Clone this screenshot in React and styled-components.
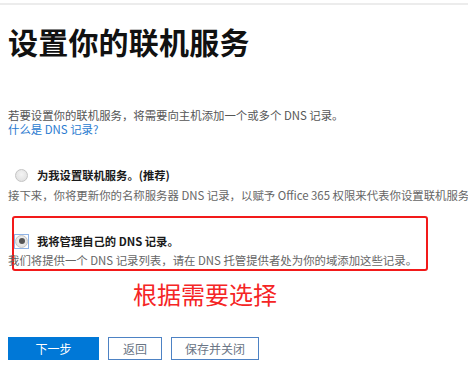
import React, { useState } from "react";
import styled, { createGlobalStyle } from "styled-components";

const GlobalStyle = createGlobalStyle`
  html, body {
    margin: 0;
    padding: 0;
    background: #fff;
    overflow: hidden;
  }
  body {
    font-family: "Noto Sans CJK SC", "Noto Sans", sans-serif;
  }
`;

export default function App() {
  const [choice, setChoice] = useState("self");

  return (
    <Page>
      <GlobalStyle />
      <TopRule />
      <Title>设置你的联机服务</Title>
      <Intro>
        <IntroLine>若要设置你的联机服务，将需要向主机添加一个或多个 DNS 记录。</IntroLine>
        <Link href="#">什么是 DNS 记录?</Link>
      </Intro>

      <Option>
        <OptionRow onClick={() => setChoice("auto")}>
          <Radio checked={choice === "auto"} />
          <Label>为我设置联机服务。(推荐)</Label>
        </OptionRow>
        <Desc>
          接下来，你将更新你的名称服务器 DNS 记录，以赋予 Office 365 权限来代表你设置联机服务
        </Desc>
      </Option>

      <Highlight>
        <OptionRow onClick={() => setChoice("self")}>
          <Focus>
            <Radio checked={choice === "self"} />
          </Focus>
          <Label $tight>我将管理自己的 DNS 记录。</Label>
        </OptionRow>
        <Desc $shift>
          我们将提供一个 DNS 记录列表，请在 DNS 托管提供者处为你的域添加这些记录。
        </Desc>
      </Highlight>

      <Note>根据需要选择</Note>

      <Actions>
        <Button $primary $w={91}>下一步</Button>
        <Button $w={54}>返回</Button>
        <Button $w={88}>保存并关闭</Button>
      </Actions>
    </Page>
  );
}

const Page = styled.div`
  width: 468px;
  height: 369px;
  padding-left: 8px;
  box-sizing: border-box;
  overflow: hidden;
`;

const TopRule = styled.div`
  margin: 3px 0 0 -8px;
  height: 2px;
  background: #ececec;
`;

const Title = styled.h1`
  margin: 16px 0 0;
  font-size: 30px;
  line-height: 40px;
  font-weight: 700;
  color: #111;
  letter-spacing: 0.2px;
`;

const Intro = styled.div`
  margin: 47px 0 0;
  display: flex;
  flex-direction: column;
  align-items: flex-start;
  font-size: 11.4px;
  line-height: 14px;
  white-space: nowrap;
`;

const IntroLine = styled.span`
  color: #555;
`;

const Link = styled.a`
  color: #2a7bd0;
  text-decoration: none;
`;

const Option = styled.div`
  margin-top: 31px;
`;

const OptionRow = styled.div`
  display: flex;
  align-items: center;
  height: 16px;
  cursor: pointer;
`;

const Radio = styled.span`
  position: relative;
  display: block;
  width: 13px;
  height: 13px;
  margin-left: ${(p) => (p.checked ? "0" : "7px")};
  border-radius: 50%;
  box-sizing: border-box;
  border: 1px solid #c4c4c4;
  background: radial-gradient(circle at 50% 40%, #f4f4f4, #dcdcdc);

  &::after {
    content: "";
    display: ${(p) => (p.checked ? "block" : "none")};
    position: absolute;
    left: 2.5px;
    top: 2.5px;
    width: 6px;
    height: 6px;
    border-radius: 50%;
    background: #555;
  }
`;

const Focus = styled.span`
  display: flex;
  align-items: center;
  justify-content: center;
  width: 15px;
  height: 15px;
  box-sizing: border-box;
  border: 1px solid #8fb3e6;
`;

const Label = styled.span`
  margin-left: ${(p) => (p.$tight ? "8px" : "9px")};
  font-size: 11.3px;
  font-weight: 700;
  line-height: 16px;
  color: #1a1a1a;
  white-space: nowrap;
`;

const Desc = styled.div`
  margin: ${(p) => (p.$shift ? "4px 0 0 -6px" : "5px 0 0")};
  font-size: 11.4px;
  line-height: 14px;
  color: #666;
  white-space: nowrap;
`;

const Highlight = styled.div`
  margin: 14px 0 0 4px;
  width: 416px;
  height: 55px;
  box-sizing: border-box;
  padding-top: 15px;
  border: 2px solid #f21a1a;
  border-radius: 3px;
`;

const Note = styled.div`
  margin: 8px 0 0 125px;
  font-size: 24px;
  line-height: 30px;
  color: #f52525;
`;

const Actions = styled.div`
  display: flex;
  gap: 9px;
  margin-top: 28px;
`;

const Button = styled.button`
  width: ${(p) => p.$w}px;
  height: 23px;
  padding: 0;
  box-sizing: border-box;
  font-family: "Noto Sans CJK SC", "Noto Sans", sans-serif;
  font-size: 12px;
  border: 1px solid ${(p) => (p.$primary ? "#0078d7" : "#4d82c4")};
  background: ${(p) => (p.$primary ? "#0078d7" : "#fff")};
  color: ${(p) => (p.$primary ? "#fff" : "#6a7585")};
  border-radius: 0;
  cursor: pointer;
`;
